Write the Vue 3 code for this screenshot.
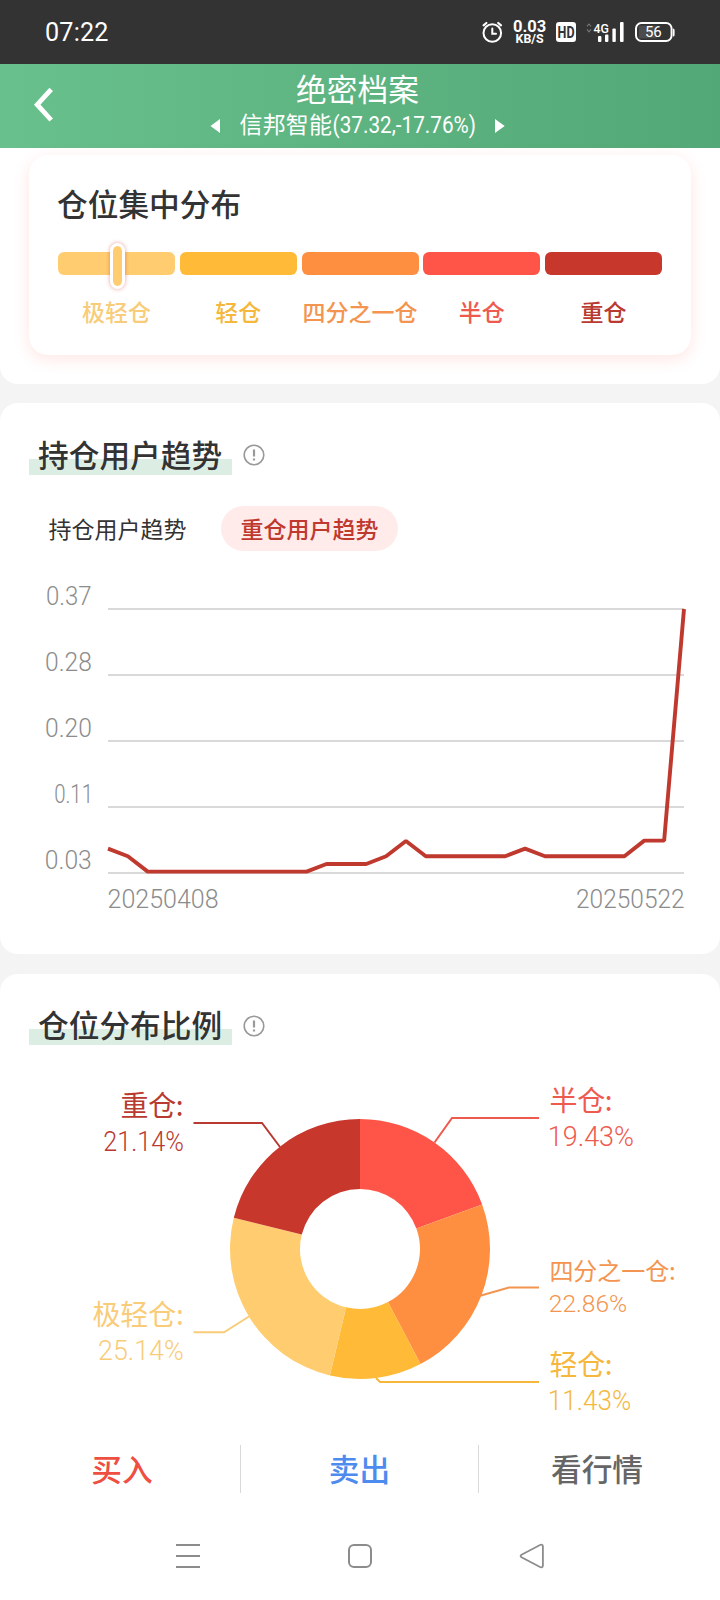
<script setup>
const levels = [
  { name: '极轻仓', color: '#ffcd70', text: '#f8cc79' },
  { name: '轻仓', color: '#ffbb38', text: '#f5b83d' },
  { name: '四分之一仓', color: '#ff8f40', text: '#f39550' },
  { name: '半仓', color: '#ff5548', text: '#ee5a4e' },
  { name: '重仓', color: '#c8372c', text: '#b83a31' },
]

const yTicks = [
  { label: '0.37', y: 609, x: 46, w: 45.6 },
  { label: '0.28', y: 675, x: 45, w: 46.8 },
  { label: '0.20', y: 741, x: 45, w: 46.8 },
  { label: '0.11', y: 807, x: 54.2, w: 38.8 },
  { label: '0.03', y: 873, x: 44.8, w: 47 },
]

const series = [
  848.6, 856.2, 871.6, 871.6, 871.6, 871.6, 871.6, 871.6, 871.6, 871.6, 871.6, 864, 864, 864, 856.2,
  841, 856.2, 856.2, 856.2, 856.2, 856.2, 848.6, 856.2, 856.2, 856.2, 856.2, 856.2, 840.6, 840.6, 609,
]
const linePoints = series.map((y, i) => `${(108 + (i * 576) / 29).toFixed(2)},${y}`).join(' ')

const CX = 360
const CY = 1249
const R = 130
const r = 60
const shares = [
  { value: 19.43, color: '#ff5548' },
  { value: 22.86, color: '#ff8f40' },
  { value: 11.43, color: '#ffbb38' },
  { value: 25.14, color: '#ffcd70' },
  { value: 21.14, color: '#c8372c' },
]
const point = (radius, t) => {
  const a = t * Math.PI * 2
  return `${(CX + radius * Math.sin(a)).toFixed(2)} ${(CY - radius * Math.cos(a)).toFixed(2)}`
}
let start = 0
const slices = shares.map((s) => {
  const a = start
  const b = start + s.value / 100
  start = b
  return {
    color: s.color,
    d: `M${point(R, a)}A${R} ${R} 0 0 1 ${point(R, b)}L${point(r, b)}A${r} ${r} 0 0 0 ${point(r, a)}Z`,
  }
})

const callouts = [
  { name: '重仓:', pct: '21.14%', color: '#b83a31', size: 28, nx: 120.6, nw: 63, px: 103.2, pw: 80.6, y1: 1116, y2: 1151, line: '193.5,1123 262,1123 280,1147' },
  { name: '极轻仓:', pct: '25.14%', color: '#f8cc79', size: 28, nx: 92.4, nw: 91.4, px: 98, pw: 85.8, y1: 1325, y2: 1360, line: '193.5,1332.3 224,1332.3 249,1316.5' },
  { name: '半仓:', pct: '19.43%', color: '#ee5a4e', size: 28, nx: 549.6, nw: 63, px: 547.8, pw: 86.2, y1: 1111, y2: 1146, line: '539,1118 452,1118 434.5,1142.5' },
  { name: '四分之一仓:', pct: '22.86%', color: '#f39550', size: 24, nx: 549.4, nw: 126.4, px: 548.8, pw: 78.4, y1: 1280, y2: 1312, line: '539,1287.5 509,1287.5 481,1295.5' },
  { name: '轻仓:', pct: '11.43%', color: '#f5b83d', size: 28, nx: 549.6, nw: 63, px: 547.8, pw: 83.4, y1: 1375, y2: 1410, line: '539,1382 380,1382 376,1378' },
]
</script>

<template>
  <div class="screen">
    <header class="status">
      <span class="time">07:22</span>
      <svg class="indicators" width="200" height="64" viewBox="480 0 200 64">
        <g fill="none" stroke="#fff" stroke-width="2" stroke-linecap="round">
          <circle cx="492.3" cy="33" r="8.8" />
          <path d="M492.3 28.5V33.8H496" />
          <path d="M483.6 25.4L486.4 23M501 25.4L498.2 23" stroke-width="2.2" />
        </g>
        <g fill="#fff" font-weight="700">
          <text x="513" y="32" font-size="16" textLength="33.2" lengthAdjust="spacingAndGlyphs">0.03</text>
          <text x="515.6" y="43.2" font-size="12.4" textLength="28" lengthAdjust="spacingAndGlyphs">KB/S</text>
        </g>
        <rect x="556" y="22" width="20" height="20" rx="3" fill="#fff" />
        <text x="557.6" y="37.6" font-size="15.6" font-weight="700" fill="#333" textLength="17" lengthAdjust="spacingAndGlyphs">HD</text>
        <path d="M587 26.4L589 24L591 26.4M587 29.4L589 31.8L591 29.4" fill="none" stroke="#777" stroke-width="1.1" />
        <text x="593.6" y="33.2" font-size="13" font-weight="500" fill="#fff" textLength="15.4" lengthAdjust="spacingAndGlyphs">4G</text>
        <g fill="#fff">
          <rect x="598" y="36" width="3.4" height="6" rx="1" />
          <rect x="605" y="34.5" width="3.4" height="7.5" rx="1" />
          <rect x="612.4" y="28.5" width="3.4" height="13.5" rx="1" />
          <rect x="620" y="22" width="3.6" height="20" rx="1" />
          <rect x="638.6" y="25.6" width="18" height="12.8" fill="#4c4c4c" />
          <path d="M673 28.5Q674.6 28.5 674.6 30V35Q674.6 36.5 673 36.5Z" />
        </g>
        <rect x="636" y="23" width="35.6" height="18" rx="5.5" fill="none" stroke="#fff" stroke-width="2" />
        <text x="645" y="37.2" font-size="15" fill="#fff" textLength="16.6">56</text>
      </svg>
    </header>

    <nav class="topbar">
      <svg class="back" width="24" height="36" viewBox="0 0 24 36"><path d="M20.2 2.4L6.2 17.7L20.2 33" fill="none" stroke="#fff" stroke-width="4.8" /></svg>
      <div class="heading">
        <h1>绝密档案</h1>
        <div class="stock">
          <svg width="10" height="14" viewBox="0 0 10 14"><path d="M10 0V14L0.5 7Z" fill="#fff" /></svg>
          <svg class="stock-name" width="238" height="36" viewBox="0 0 238 36">
            <text x="-0.4" y="24.6" font-size="23" fill="#fff" textLength="92.4">信邦智能</text>
            <text class="num" x="92.6" y="24.6" font-size="23.6" fill="#fff" textLength="143.4" lengthAdjust="spacingAndGlyphs">(37.32,-17.76%)</text>
          </svg>
          <svg width="10" height="14" viewBox="0 0 10 14"><path d="M0 0V14L9.7 7Z" fill="#fff" /></svg>
        </div>
      </div>
    </nav>

    <section class="panel first">
      <div class="card">
        <h2>仓位集中分布</h2>
        <div class="levels">
          <div v-for="(l, i) in levels" :key="l.name" class="level">
            <div class="bar" :style="{ background: l.color }"><i v-if="i === 0" class="marker"></i></div>
            <span :style="{ color: l.text }">{{ l.name }}</span>
          </div>
        </div>
      </div>
    </section>

    <section class="panel trend">
      <div class="title-row">
        <h2 class="marked">持仓用户趋势</h2>
        <svg width="22" height="22" viewBox="0 0 22 22"><circle cx="11" cy="11" r="9.8" fill="none" stroke="#999" stroke-width="1.6" /><path d="M11 5.4V12.6M11 14.4V16.4" stroke="#999" stroke-width="2.2" /></svg>
      </div>
      <div class="tabs">
        <span class="tab">持仓用户趋势</span>
        <span class="tab active">重仓用户趋势</span>
      </div>
      <svg class="trend-chart" width="720" height="350" viewBox="0 570 720 350">
        <g v-for="t in yTicks" :key="t.label">
          <path :d="`M108 ${t.y}H684`" stroke="#d9d9d9" stroke-width="2" />
          <text :x="t.x" :y="t.y - 4" class="axis" :textLength="t.w" lengthAdjust="spacingAndGlyphs">{{ t.label }}</text>
        </g>
        <text x="107.6" y="908" class="axis" textLength="111" lengthAdjust="spacingAndGlyphs">20250408</text>
        <text x="576" y="908" class="axis" textLength="108.6" lengthAdjust="spacingAndGlyphs">20250522</text>
        <polyline :points="linePoints" fill="none" stroke="#c0392f" stroke-width="3.9" stroke-linejoin="bevel" />
      </svg>
    </section>

    <section class="panel share">
      <div class="title-row">
        <h2 class="marked">仓位分布比例</h2>
        <svg width="22" height="22" viewBox="0 0 22 22"><circle cx="11" cy="11" r="9.8" fill="none" stroke="#999" stroke-width="1.6" /><path d="M11 5.4V12.6M11 14.4V16.4" stroke="#999" stroke-width="2.2" /></svg>
      </div>
      <svg class="share-chart" width="720" height="370" viewBox="0 1065 720 370">
        <g v-for="c in callouts" :key="c.name">
          <polyline :points="c.line" fill="none" :stroke="c.color" stroke-width="2" />
          <text :x="c.nx" :y="c.y1" :font-size="c.size" :fill="c.color" :textLength="c.nw">{{ c.name }}</text>
          <text class="num" :x="c.px" :y="c.y2" :font-size="c.size" :fill="c.color" :textLength="c.pw" lengthAdjust="spacingAndGlyphs">{{ c.pct }}</text>
        </g>
        <path v-for="s in slices" :key="s.d" :d="s.d" :fill="s.color" />
      </svg>
    </section>

    <footer class="actions">
      <span class="buy">买入</span>
      <span class="sell">卖出</span>
      <span class="quote">看行情</span>
    </footer>

    <div class="sysnav">
      <svg width="28" height="28" viewBox="0 0 28 28"><path d="M2 3H26M2 14H26M2 25H26" stroke="#8c8c8c" stroke-width="2" /></svg>
      <svg width="28" height="28" viewBox="0 0 28 28"><rect x="3" y="3" width="22" height="22" rx="5" fill="none" stroke="#8c8c8c" stroke-width="2" /></svg>
      <svg width="28" height="28" viewBox="0 0 28 28"><path d="M3.5 12.7L22 3Q24.6 2 24.9 4.4V23.6Q24.6 26 22 25L3.5 15.3Q1.7 14 3.5 12.7Z" fill="none" stroke="#8c8c8c" stroke-width="1.8" /></svg>
    </div>
  </div>
</template>

<style>
body {
  background: #fff;
}
</style>

<style scoped>
.screen {
  width: 720px;
  height: 1600px;
  overflow: hidden;
  display: flex;
  flex-direction: column;
  background: #f4f4f4;
  color: #333;
  font-family: "Noto Sans CJK SC", sans-serif;
}
svg {
  display: block;
  flex: none;
  overflow: visible;
}
h1,
h2 {
  margin: 0;
  font-weight: 500;
}
.status {
  flex: none;
  height: 64px;
  box-sizing: border-box;
  padding: 0 40px 0 45px;
  display: flex;
  justify-content: space-between;
  align-items: center;
  background: #333;
}
.time,
.num,
.axis,
.indicators text {
  font-family: Roboto, "Noto Sans CJK SC", sans-serif;
}
.time {
  color: #fff;
  font-size: 25.2px;
  line-height: 32px;
  padding-top: 1px;
  letter-spacing: 0.2px;
}
.topbar {
  flex: none;
  height: 84px;
  display: grid;
  grid-template-columns: 60px 600px 60px;
  background: linear-gradient(90deg, #68c08c, #52a876);
}
.back {
  margin: 23px 0 0 31px;
}
.heading {
  display: flex;
  flex-direction: column;
  align-items: center;
  color: #fff;
}
h1 {
  font-size: 30.7px;
  font-weight: 400;
  line-height: 40px;
  height: 40px;
  margin-top: 4px;
  margin-left: -5px;
}
.stock {
  display: flex;
  align-items: center;
  height: 36px;
  margin-left: -5px;
}
.stock-name {
  margin: 0 17px 0 20px;
}
.panel {
  flex: none;
  background: #fff;
  border-radius: 18px;
}
.first {
  height: 236px;
  box-sizing: border-box;
  padding: 7px 29px 0;
  border-radius: 0 0 18px 18px;
}
.card {
  height: 200px;
  box-sizing: border-box;
  padding: 28px 29px 0 28px;
  border-radius: 19px;
  background: #fff;
  box-shadow: 0 4px 16px #ff554826;
}
.card h2 {
  font-size: 30.7px;
  line-height: 40px;
}
.levels {
  display: grid;
  grid-template-columns: repeat(5, 117px);
  justify-content: space-between;
  margin: 29px 0 0 1px;
}
.level {
  text-align: center;
  font-size: 23px;
  font-weight: 500;
  line-height: 32px;
  white-space: nowrap;
}
.bar {
  height: 23px;
  margin-bottom: 20px;
  border-radius: 6px;
  display: flex;
  justify-content: center;
  align-items: center;
}
.marker {
  width: 9px;
  height: 40px;
  flex: none;
  border: 3px solid #fff;
  border-radius: 8px;
  margin-left: 2px;
  background: #ffcd70;
  background-clip: padding-box;
  box-shadow: 0 0 4px #c8372c77;
  position: relative;
  top: 2px;
}
.trend {
  height: 551px;
  margin-top: 19px;
}
.share {
  height: 461px;
  margin-top: 20px;
  border-radius: 18px 18px 0 0;
}
.title-row {
  display: flex;
  align-items: center;
  gap: 11px;
  padding: 32px 29px 0;
  height: 40px;
}
.marked {
  width: 203px;
  height: 40px;
  box-sizing: border-box;
  padding-left: 9px;
  font-size: 30.7px;
  line-height: 38px;
  white-space: nowrap;
  background: linear-gradient(#dceee4, #dceee4) 0 24px / 203px 16px no-repeat;
}
.share .marked {
  background-position: 0 23px;
  line-height: 35px;
}
.tabs {
  display: flex;
  height: 45px;
  margin-top: 31px;
  padding-left: 29px;
  gap: 15px;
}
.tab {
  width: 177px;
  height: 45px;
  line-height: 44px;
  text-align: center;
  font-size: 23px;
}
.active {
  background: #ffebea;
  border-radius: 23px;
  color: #c0392f;
  font-weight: 500;
}
.trend-chart {
  margin-top: 19px;
}
.axis {
  font-size: 25px;
  font-weight: 300;
  fill: #8c8c8c;
}
.share-chart {
  margin-top: 19px;
}
.share-chart .num {
  font-weight: 300;
}
.actions {
  flex: none;
  height: 58px;
  display: grid;
  grid-template-columns: 241px 238px 241px;
  align-items: start;
  background: #fff;
  padding-top: 10px;
}
.actions span {
  height: 48px;
  line-height: 46px;
  text-align: center;
  font-size: 30.7px;
  font-weight: 500;
  border-right: 1px solid #d9d9d9;
}
.actions .buy {
  padding-left: 4px;
  color: #ee4f42;
}
.actions .quote {
  border: 0;
  padding-right: 5px;
  color: #666;
}
.sell {
  color: #4d8bef;
}
.sysnav {
  flex: 1;
  display: flex;
  justify-content: center;
  gap: 144px;
  padding-top: 39px;
  background: #fff;
}
</style>
